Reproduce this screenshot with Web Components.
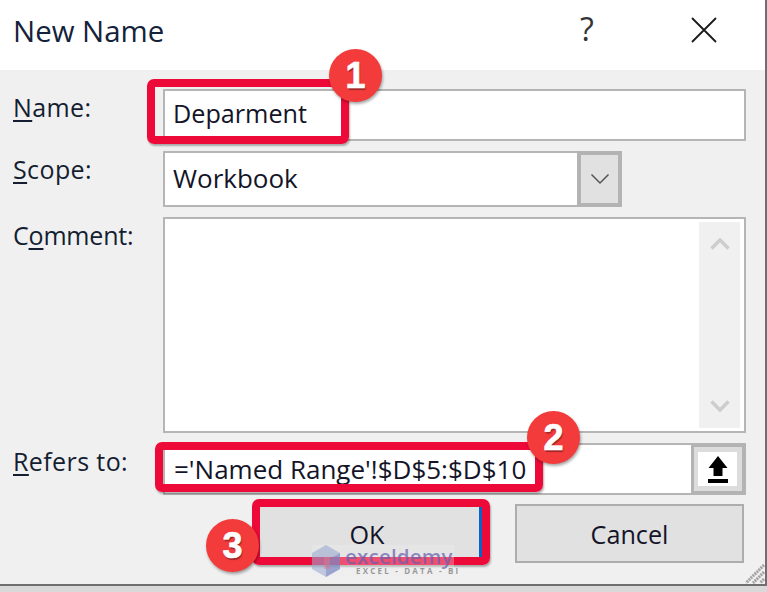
<!DOCTYPE html>
<html><head><meta charset="utf-8"><style>
html,body{margin:0;padding:0;width:767px;height:592px;overflow:hidden;background:#d9d9d9}
body{font-family:"Open Sans","Noto Sans",sans-serif;color:#141428}
</style></head><body>
<name-dialog heading="New Name">
  <form-row label="Name" key="N" style="--h:52px;--mt:19px;--ls:.4px"><text-box value="Deparment" style="--fs:25.2px"></text-box></form-row>
  <form-row label="Scope" key="S" style="--h:56px;--mt:10px;--w:459px;--ls:.4px"><combo-box value="Workbook" style="--fs:26px"></combo-box></form-row>
  <form-row label="Comment" key="o" style="--h:216px;--mt:10px;--ls:-.2px"><memo-box></memo-box></form-row>
  <form-row label="Refers to" key="R" style="--h:51px;--mt:10px;--ls:.4px"><ref-box value="='Named Range'!$D$5:$D$10" style="--fs:26px"></ref-box></form-row>
  <button-row slot="footer"><dlg-button wide>OK</dlg-button><dlg-button>Cancel</dlg-button></button-row>
</name-dialog>
<script>
function def(name, css, html, init){
  customElements.define(name, class extends HTMLElement{
    constructor(){super();const r=this.attachShadow({mode:'open'});
      r.innerHTML='<style>'+css+'</style>'+html;}
    connectedCallback(){ if(init)init(this,this.shadowRoot); }
  });
}
def('name-dialog',`
 :host{display:block;position:relative;width:765px;height:584px;background:#f0f0f0;border-right:2px solid #6f6f6f;border-bottom:2px solid #6f6f6f;overflow:visible}
 .title{height:70px;background:#fff;display:flex;align-items:center;padding-left:13px;font-size:29.4px;color:#14233a}
 .title span.t{flex:1;position:relative;top:-4px}
 .help{font-size:32px;color:#333;width:38px;text-align:center;position:relative;top:-7px;margin-right:85px}
 .x{margin-right:48px;position:relative;top:-5px;display:block}
 .body{display:flex;flex-direction:column}
 .grip{position:absolute;right:0;bottom:0}
 .wm{position:absolute;left:312px;top:545px;width:142px;height:32px;background:rgba(240,240,240,.3);display:flex;align-items:flex-start;gap:5px}
 .wm svg{flex:none}
 .wm .w{display:flex;flex-direction:column;font-family:"Open Sans",sans-serif;color:rgba(105,95,175,.72)}
 .wm b{display:block;font-size:20.5px;line-height:17px;height:17px;font-weight:600;letter-spacing:.2px;margin-top:3px}
 .wm i{display:block;font-style:normal;font-size:8px;letter-spacing:2.2px;line-height:9px;color:rgba(135,135,135,.85);font-weight:700;padding-left:11px;white-space:nowrap;margin-top:1px}
 .mark{position:absolute;border:8px solid #ee0a38;border-radius:7px;box-sizing:border-box;box-shadow:1px 2px 2px rgba(0,0,0,.3)}
 .badge{position:absolute;width:53px;height:53px;border-radius:50%;background:#f33b3b;color:#fff;font:700 36px/53px "Liberation Sans",Arial,sans-serif;-webkit-text-stroke:.7px #fff;text-align:center;box-shadow:1px 2px 3px rgba(0,0,0,.35);text-shadow:1px 2px 1px rgba(0,0,0,.35)}
`,`
 <div class="title"><span class="t"></span><span class="help">?</span>
 <svg class="x" width="26" height="26" viewBox="0 0 26 26"><path d="M1 1L25 25M25 1L1 25" stroke="#1a1a1a" stroke-width="1.8" fill="none"/></svg></div>
 <div class="body"><slot></slot><slot name="footer"></slot></div>
 <svg class="grip" width="24" height="24" viewBox="0 0 24 24"><path d="M23 5L5 23M23 12L12 23M23 19L19 23" stroke="#a2a2a2" stroke-width="3" stroke-dasharray="2 .8" fill="none"/></svg>
 <div class="mark" style="left:147px;top:79px;width:202px;height:65px"></div>
 <div class="mark" style="left:155px;top:442px;width:388px;height:50px"></div>
 <div class="mark" style="left:252px;top:499px;width:238px;height:66px"></div>
 <div class="wm"><svg width="28" height="32" viewBox="0 0 28 32"><path d="M14 0L28 8V24L14 32L0 24V8Z" fill="rgba(120,140,200,.4)"/><path d="M14 16L28 8V24L14 32Z" fill="rgba(120,130,190,.5)"/><path d="M12 12h6v12h-6z" fill="rgba(220,120,140,.5)"/></svg>
 <div class="w"><b>exceldemy</b><i>EXCEL - DATA - BI</i></div></div>
 <div class="badge" style="left:329px;top:49px">1</div>
 <div class="badge" style="left:527px;top:411px">2</div>
 <div class="badge" style="left:206px;top:519px">3</div>
`,(h,r)=>{r.querySelector('.t').textContent=h.getAttribute('heading')});

def('form-row',`
 :host{display:grid;grid-template-columns:163px var(--w,583px);height:var(--h);margin-top:var(--mt);font-size:25px}
 label{padding-left:13px;color:#141e30;position:relative;top:2px;line-height:33px;letter-spacing:var(--ls,0);white-space:nowrap}
 u{text-decoration-thickness:2px;text-underline-offset:3px}
 .c{display:grid}
`,`<label></label><div class="c"><slot></slot></div>`,(h,r)=>{
  const l=h.getAttribute('label'),k=h.getAttribute('key'),i=l.indexOf(k);
  const lab=r.querySelector('label');
  lab.append(l.slice(0,i));const u=document.createElement('u');u.textContent=k;lab.append(u,l.slice(i+1)+':');
});

const boxCss=`:host{display:block;background:#fff;border:2px solid #b5b5b5;box-sizing:border-box;font-size:var(--fs,25px);color:#141428}`;
const setV=(h,r)=>{r.querySelector('.v').textContent=h.getAttribute('value')};
def('text-box',boxCss+`.v{padding-left:8px;line-height:45px}`,`<div class="v"></div>`,setV);
def('combo-box',boxCss+`:host{display:flex;border-width:2px 0 2px 2px}.v{flex:1;padding-left:8px;line-height:51px}
 .b{width:45px;box-sizing:border-box;border:4px solid #b3b3b3;background:#e1e1e1;margin-top:-2px;margin-bottom:-2px;display:flex;align-items:center;justify-content:center}`,
 `<div class="v"></div><div class="b"><svg width="20" height="12" viewBox="0 0 20 12"><path d="M1.5 1.5L10 10L18.5 1.5" stroke="#555" stroke-width="1.5" fill="none"/></svg></div>`,setV);
def('memo-box',boxCss+`:host{display:flex;justify-content:flex-end;padding:3px 4px 3px 0}
 .s{width:41px;background:#f0f0f0;display:flex;flex-direction:column;justify-content:space-between;align-items:center;padding:15px 0}`,
 `<div class="s"><svg width="20" height="13" viewBox="0 0 20 13"><path d="M1.5 11.5L10 3L18.5 11.5" stroke="#cdcdcd" stroke-width="3.4" fill="none"/></svg><svg width="20" height="13" viewBox="0 0 20 13"><path d="M1.5 1.5L10 10L18.5 1.5" stroke="#cdcdcd" stroke-width="3.4" fill="none"/></svg></div>`);
def('ref-box',boxCss+`:host{display:flex}.v{flex:1;padding-left:9px;line-height:48px;white-space:nowrap}
 .b{width:54px;box-sizing:border-box;border:solid #dcdcdc;border-width:8px 8px 8px 7px;outline:3px solid #b3b3b3;outline-offset:-3px;margin:-1px -1px -1px 0;display:flex;align-items:center;justify-content:center;background:#fff}`,
 `<div class="v"></div><div class="b"><svg width="20" height="27" viewBox="0 0 20 27"><path d="M10 0L19.5 12H14.5V20H5.5V12H.5Z M0 23h20v4H0Z" fill="#000"/></svg></div>`,setV);
def('button-row',`:host{display:flex;margin-top:10px;padding-left:255px;gap:33px}`,`<slot></slot>`);
def('dlg-button',`:host{display:flex;width:229px;height:59px;box-sizing:border-box;align-items:center;justify-content:center;background:#e1e1e1;border:2px solid #adadad;font-size:25.2px;line-height:20px;color:#141428}
 :host([wide]){width:227px;border-width:0 3px 0 0;border-color:#0a64c8}`,`<slot></slot>`);
</script>
</body></html>
